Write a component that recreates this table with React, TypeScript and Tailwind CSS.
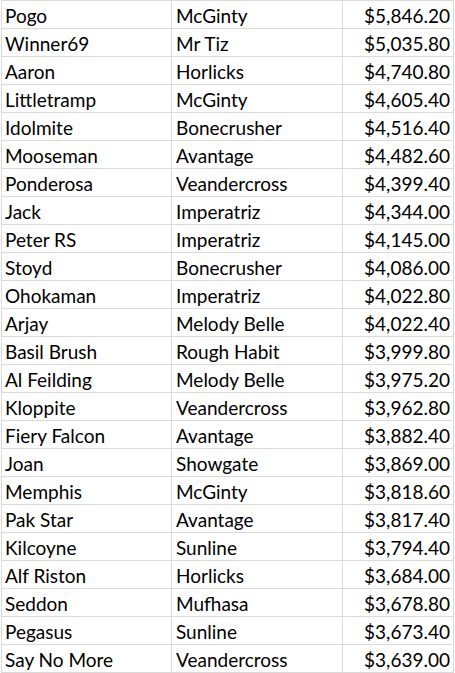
const rows: [string, string, string][] = [
  ["Pogo", "McGinty", "$5,846.20"],
  ["Winner69", "Mr Tiz", "$5,035.80"],
  ["Aaron", "Horlicks", "$4,740.80"],
  ["Littletramp", "McGinty", "$4,605.40"],
  ["Idolmite", "Bonecrusher", "$4,516.40"],
  ["Mooseman", "Avantage", "$4,482.60"],
  ["Ponderosa", "Veandercross", "$4,399.40"],
  ["Jack", "Imperatriz", "$4,344.00"],
  ["Peter RS", "Imperatriz", "$4,145.00"],
  ["Stoyd", "Bonecrusher", "$4,086.00"],
  ["Ohokaman", "Imperatriz", "$4,022.80"],
  ["Arjay", "Melody Belle", "$4,022.40"],
  ["Basil Brush", "Rough Habit", "$3,999.80"],
  ["Al Feilding", "Melody Belle", "$3,975.20"],
  ["Kloppite", "Veandercross", "$3,962.80"],
  ["Fiery Falcon", "Avantage", "$3,882.40"],
  ["Joan", "Showgate", "$3,869.00"],
  ["Memphis", "McGinty", "$3,818.60"],
  ["Pak Star", "Avantage", "$3,817.40"],
  ["Kilcoyne", "Sunline", "$3,794.40"],
  ["Alf Riston", "Horlicks", "$3,684.00"],
  ["Seddon", "Mufhasa", "$3,678.80"],
  ["Pegasus", "Sunline", "$3,673.40"],
  ["Say No More", "Veandercross", "$3,639.00"],
];

export default function App() {
  return (
    <div className="min-h-[673px] w-[455px] bg-white font-['Lato',sans-serif] text-[19px] text-black">
      <div className="ml-px w-[453px] border-l border-t border-[#dadada]">
        {rows.map(([name, horse, amount]) => (
          <div key={name} className="grid h-[28px] grid-cols-[170px_171px_111px]">
            <div className="flex items-end border-b border-r border-[#dadada] pb-[3px] pl-[3px] leading-none">
              {name}
            </div>
            <div className="flex items-end border-b border-r border-[#dadada] pb-[3px] pl-[4px] leading-none">
              {horse}
            </div>
            <div className="flex items-end justify-end border-b border-r border-[#dadada] pb-[3px] pr-[3px] leading-none">
              {amount}
            </div>
          </div>
        ))}
      </div>
    </div>
  );
}
